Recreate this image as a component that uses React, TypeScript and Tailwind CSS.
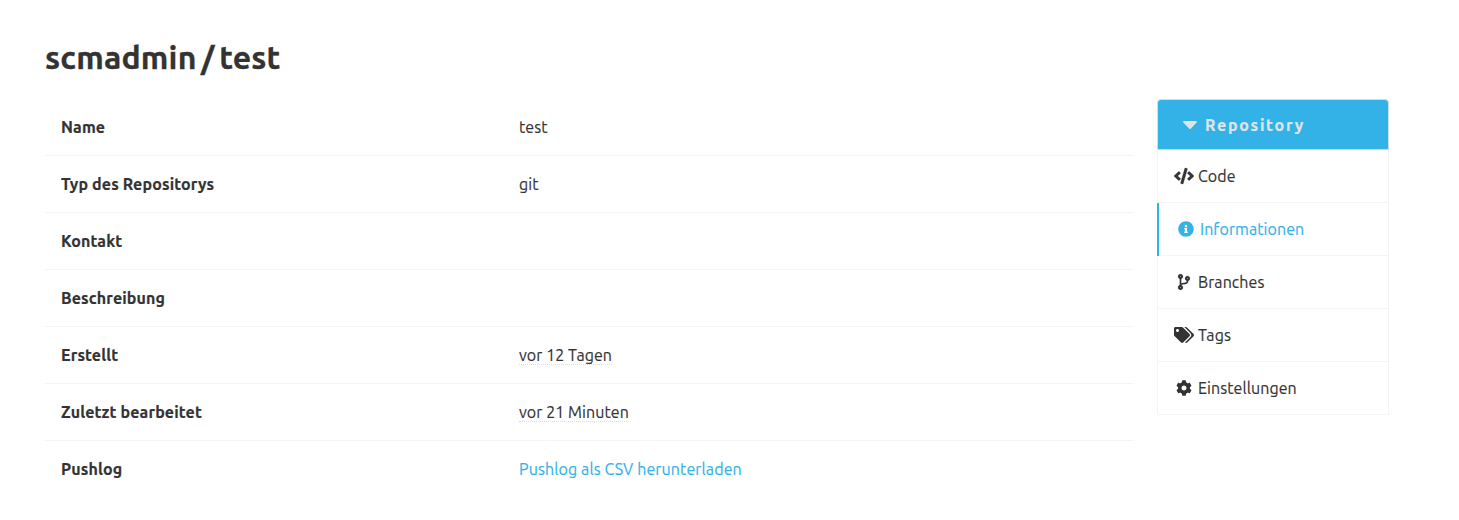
import type { ReactNode } from 'react';
import { FaCaretDown, FaCode, FaCodeBranch, FaCog, FaInfoCircle, FaTags } from 'react-icons/fa';

type Row = { label: string; value?: ReactNode };

function DateValue({ children }: { children: string }) {
  return (
    <time className="inline-block h-[22px] border-b border-dotted border-[#dbdbdb] leading-6">{children}</time>
  );
}

const rows: Row[] = [
  { label: 'Name', value: 'test' },
  { label: 'Typ des Repositorys', value: 'git' },
  { label: 'Kontakt' },
  { label: 'Beschreibung' },
  { label: 'Erstellt', value: <DateValue>vor 12 Tagen</DateValue> },
  { label: 'Zuletzt bearbeitet', value: <DateValue>vor 21 Minuten</DateValue> },
  {
    label: 'Pushlog',
    value: <a className="tracking-[0.11px] text-[#33b2e8]">Pushlog als CSV herunterladen</a>,
  },
];

const items = [
  { label: 'Code', icon: <FaCode className="size-5 stroke-current stroke-[10px]" />, active: false },
  { label: 'Informationen', icon: <FaInfoCircle className="size-4" />, active: true },
  { label: 'Branches', icon: <FaCodeBranch className="size-4 stroke-current stroke-[5px]" />, active: false },
  { label: 'Tags', icon: <FaTags className="size-5" />, active: false },
  { label: 'Einstellungen', icon: <FaCog className="size-4" />, active: false },
];

export default function App() {
  return (
    <main className="h-[520px] overflow-hidden bg-white pl-[45px] pt-[39px] font-[Ubuntu,'Noto_Sans',sans-serif] text-base leading-6 text-[#333333]">
      <h1 className="flex h-9 items-center text-[32px] font-semibold leading-9 tracking-[0.18px] [-webkit-text-stroke:0.3px_currentColor]">
        <span>scmadmin</span>
        <span className="mx-[4.5px]">/</span>
        <span>test</span>
      </h1>
      <div className="mt-6 flex items-start gap-6">
        <dl className="w-[1088px]">
          {rows.map((row) => (
            <div
              key={row.label}
              className="flex h-[57px] items-center border-b border-[#f4f4f4] last:border-transparent"
            >
              <dt className="w-[458px] pl-4 font-bold tracking-[0.14px] [-webkit-text-stroke:0.2px_currentColor]">
                {row.label}
              </dt>
              <dd className="flex-1 pl-4 tracking-[0.07px] [-webkit-text-stroke:0.15px_currentColor]">{row.value}</dd>
            </div>
          ))}
        </dl>
        <aside className="w-[232px]">
          <p className="flex h-[51px] items-center rounded-t border border-[#cddde4] bg-[#33b2e8] pl-5 font-bold tracking-[1.75px] text-[#e0e4e6] [-webkit-text-stroke:0.2px_currentColor]">
            <FaCaretDown className="mb-px mr-[3px] size-6" />
            Repository
          </p>
          <ul className="tracking-[0.07px] [-webkit-text-stroke:0.15px_currentColor]">
            {items.map((item) => (
              <li
                key={item.label}
                className={
                  item.active
                    ? 'flex h-[53px] items-center border-l-2 border-r border-l-[#33b2e8] border-r-[#f4f4f4] pb-px pl-[17px] text-[#33b2e8] shadow-[inset_0_-1px_0_#f4f4f4] [-webkit-text-stroke:0.15px_currentColor]'
                    : 'flex h-[53px] items-center border-b border-l border-r border-[#f4f4f4] pl-4'
                }
              >
                <span className="mr-1 flex w-5 justify-center">{item.icon}</span>
                {item.label}
              </li>
            ))}
          </ul>
        </aside>
      </div>
    </main>
  );
}
